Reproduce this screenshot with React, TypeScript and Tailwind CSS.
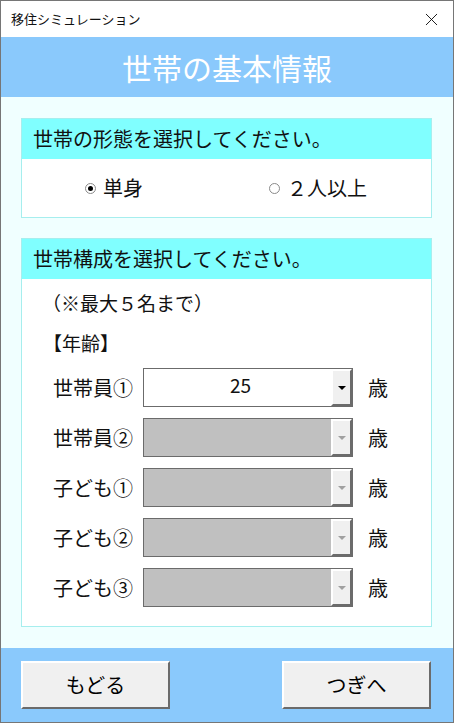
import { X } from 'lucide-react';

const rows = [
  { label: '世帯員①', value: '25', enabled: true },
  { label: '世帯員②', value: '', enabled: false },
  { label: '子ども①', value: '', enabled: false },
  { label: '子ども②', value: '', enabled: false },
  { label: '子ども③', value: '', enabled: false },
];

const Radio = ({ checked, label }: { checked: boolean; label: string }) => (
  <label className="flex items-center gap-[7px]">
    <span className="w-[11px] h-[11px] rounded-full border border-[#8a8a8a] bg-white flex items-center justify-center">
      {checked && <span className="w-[5px] h-[5px] rounded-full bg-black" />}
    </span>
    <span className="text-[20px] leading-none">{label}</span>
  </label>
);

const Combo = ({ value, enabled }: { value: string; enabled: boolean }) => (
  <div
    className={`w-[210px] h-[39px] border border-[#6b6b6b] flex ${
      enabled ? 'bg-white' : 'bg-[#c0c0c0]'
    }`}
  >
    <div className="flex-1 flex items-start justify-center pt-[4px] text-[19px] leading-[24px] pl-[6px]">
      {value}
    </div>
    <div className="w-[21px] h-full bg-[#f0f0f0] border-t-2 border-l-2 border-white border-r-2 border-r-[#6b6b6b] border-b-2 border-b-[#6b6b6b] flex items-center justify-center">
      <span
        className={`w-0 h-0 border-l-[4px] border-r-[4px] border-t-[4px] border-l-transparent border-r-transparent ${
          enabled ? 'border-t-black' : 'border-t-[#a0a0a0]'
        }`}
      />
    </div>
  </div>
);

const Button = ({ label }: { label: string }) => (
  <button className="w-[149px] h-[48px] bg-[#f0f0f0] border-t-2 border-l-2 border-white border-r-2 border-r-[#6b6b6b] border-b-2 border-b-[#6b6b6b] text-[20px] text-black">
    {label}
  </button>
);

export default function App() {
  return (
    <div
      className="w-[454px] h-[723px] border border-[#767676] flex flex-col text-[#111]"
      style={{ fontFamily: '"Noto Sans CJK JP", "Noto Sans", sans-serif' }}
    >
      <div className="h-[36px] bg-white flex items-center justify-between pl-[10px] pr-[11px]">
        <span className="text-[13px]">移住シミュレーション</span>
        <X size={21} strokeWidth={1} className="text-black" />
      </div>

      <div className="h-[60px] bg-[#8ac9fc] flex items-center justify-center text-white text-[30px] leading-none">
        世帯の基本情報
      </div>

      <div className="flex-1 bg-[#f0ffff] pl-[20px] pt-[21px] flex flex-col gap-[20px]">
        <div className="w-[411px] border border-[#a6eeee] bg-white">
          <div className="h-[40px] bg-[#80ffff] flex items-center pl-[11px] text-[20px]">
            世帯の形態を選択してください。
          </div>
          <div className="h-[58px] flex items-center pl-[63px] gap-[126px]">
            <Radio checked label="単身" />
            <Radio checked={false} label="２人以上" />
          </div>
        </div>

        <div className="w-[411px] border border-[#a6eeee] bg-white pb-[19px]">
          <div className="h-[40px] bg-[#80ffff] flex items-center pl-[11px] text-[20px]">
            世帯構成を選択してください。
          </div>
          <div className="pl-[20px] pt-[10px] text-[19px] leading-[28px]">（※最大５名まで）</div>
          <div className="pl-[21px] pt-[12px] text-[19px] leading-[28px]">【年齢】</div>
          <div className="flex flex-col gap-[11px] pt-[11px]">
            {rows.map((r) => (
              <div key={r.label} className="flex items-center pl-[31px]">
                <span className="w-[90px] text-[20px]">{r.label}</span>
                <Combo value={r.value} enabled={r.enabled} />
                <span className="ml-[15px] text-[20px]">歳</span>
              </div>
            ))}
          </div>
        </div>
      </div>

      <div className="h-[74px] bg-[#8ac9fc] flex items-start justify-between pl-[20px] pr-[22px] pt-[13px]">
        <Button label="もどる" />
        <Button label="つぎへ" />
      </div>
    </div>
  );
}
